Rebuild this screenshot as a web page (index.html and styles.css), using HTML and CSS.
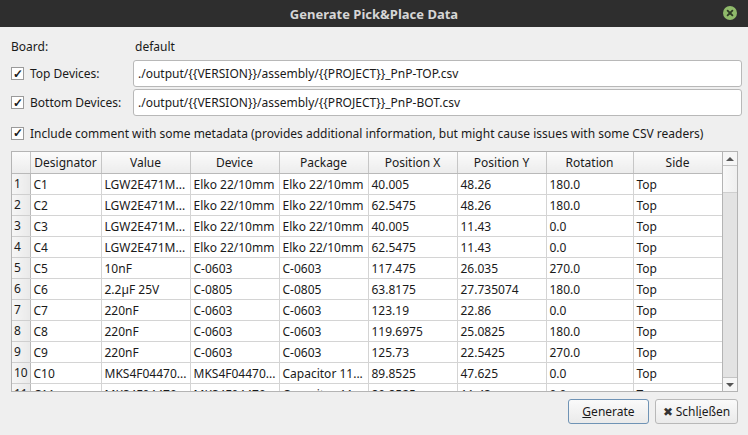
FILE: index.html
```html
<!DOCTYPE html>
<html>
<head>
<meta charset="utf-8">
<link rel="stylesheet" href="styles.css">
</head>
<body>
<div class="window">
  <div class="titlebar">
    <span class="title">Generate Pick&amp;Place Data</span>
    <span class="close"><svg width="14" height="14" viewBox="0 0 14 14"><circle cx="7" cy="7" r="7" fill="#8fba6a"/><path d="M4.6 4.6 L9.4 9.4 M9.4 4.6 L4.6 9.4" stroke="#2d3a25" stroke-width="1.8" stroke-linecap="round"/></svg></span>
  </div>
  <div class="content">
    <div class="row board"><span class="lbl">Board:</span><span>default</span></div>
    <div class="row field">
      <label class="chk"><span class="box">✓</span>Top Devices:</label>
      <div class="input">./output/{{VERSION}}/assembly/{{PROJECT}}_PnP-TOP.csv</div>
    </div>
    <div class="row field">
      <label class="chk"><span class="box">✓</span>Bottom Devices:</label>
      <div class="input">./output/{{VERSION}}/assembly/{{PROJECT}}_PnP-BOT.csv</div>
    </div>
    <div class="row meta"><label class="chk"><span class="box">✓</span>Include comment with some metadata (provides additional information, but might cause issues with some CSV readers)</label></div>
    <div class="tablewrap">
      <div class="tablearea">
        <table>
          <colgroup><col class="c0"><col class="c1"><col class="c2"><col class="c2"><col class="c2"><col class="c2"><col class="c2"><col class="c7"><col class="c2"></colgroup>
          <thead><tr><th class="corner"></th><th>Designator</th><th>Value</th><th>Device</th><th>Package</th><th>Position X</th><th>Position Y</th><th>Rotation</th><th>Side</th></tr></thead>
          <tbody>
            <tr><th>1</th><td>C1</td><td>LGW2E471M...</td><td>Elko 22/10mm</td><td>Elko 22/10mm</td><td>40.005</td><td>48.26</td><td>180.0</td><td>Top</td></tr>
            <tr><th>2</th><td>C2</td><td>LGW2E471M...</td><td>Elko 22/10mm</td><td>Elko 22/10mm</td><td>62.5475</td><td>48.26</td><td>180.0</td><td>Top</td></tr>
            <tr><th>3</th><td>C3</td><td>LGW2E471M...</td><td>Elko 22/10mm</td><td>Elko 22/10mm</td><td>40.005</td><td>11.43</td><td>0.0</td><td>Top</td></tr>
            <tr><th>4</th><td>C4</td><td>LGW2E471M...</td><td>Elko 22/10mm</td><td>Elko 22/10mm</td><td>62.5475</td><td>11.43</td><td>0.0</td><td>Top</td></tr>
            <tr><th>5</th><td>C5</td><td>10nF</td><td>C-0603</td><td>C-0603</td><td>117.475</td><td>26.035</td><td>270.0</td><td>Top</td></tr>
            <tr><th>6</th><td>C6</td><td>2.2µF 25V</td><td>C-0805</td><td>C-0805</td><td>63.8175</td><td>27.735074</td><td>180.0</td><td>Top</td></tr>
            <tr><th>7</th><td>C7</td><td>220nF</td><td>C-0603</td><td>C-0603</td><td>123.19</td><td>22.86</td><td>0.0</td><td>Top</td></tr>
            <tr><th>8</th><td>C8</td><td>220nF</td><td>C-0603</td><td>C-0603</td><td>119.6975</td><td>25.0825</td><td>180.0</td><td>Top</td></tr>
            <tr><th>9</th><td>C9</td><td>220nF</td><td>C-0603</td><td>C-0603</td><td>125.73</td><td>22.5425</td><td>270.0</td><td>Top</td></tr>
            <tr><th>10</th><td>C10</td><td>MKS4F04470...</td><td>MKS4F04470...</td><td>Capacitor 11...</td><td>89.8525</td><td>47.625</td><td>0.0</td><td>Top</td></tr>
            <tr><th>11</th><td>C11</td><td>MKS4F04470...</td><td>MKS4F04470...</td><td>Capacitor 11...</td><td>89.8525</td><td>11.43</td><td>0.0</td><td>Top</td></tr>
          </tbody>
        </table>
      </div>
      <div class="scrollbar">
        <div class="sbtn"><span class="arrow up"></span></div>
        <div class="thumb"></div>
        <div class="track"></div>
        <div class="sbtn down"><span class="arrow dn"></span></div>
      </div>
    </div>
    <div class="buttons">
      <button class="btn default"><u>G</u>enerate</button>
      <button class="btn"><span class="x">✖</span>Schl<u>i</u>eßen</button>
    </div>
  </div>
</div>
</body>
</html>
```
FILE: styles.css
```css
* { box-sizing: border-box; }
html, body { margin: 0; padding: 0; }
body {
  width: 748px; height: 435px; overflow: hidden;
  background: #efefef;
  font-family: "Noto Sans", "Open Sans", sans-serif;
  font-size: 12px;
  color: #1a1a1a;
}
.window { display: flex; flex-direction: column; height: 435px; }
.titlebar {
  height: 27px; background: #2e2e2e;
  display: flex; align-items: center; justify-content: center;
  position: relative;
}
.title { color: #d6d6d6; font-weight: bold; font-size: 13px; }
.close { position: absolute; right: 11px; top: 6px; width: 14px; height: 14px; display: flex; }
.content { padding: 10px 10px 0 11px; display: flex; flex-direction: column; }
.row { display: flex; align-items: center; }
.board { height: 19px; }
.board .lbl { width: 124px; }
.field { height: 27px; margin-top: 2px; }
.field + .field { margin-top: 2px; }
.board + .field { margin-top: 4px; }
.chk { display: flex; align-items: center; width: 122px; white-space: nowrap; }
.meta { margin-top: 7px; height: 20px; }
.meta .chk { width: auto; }
.box {
  width: 13px; height: 13px; border: 1px solid #9a9a9a; background: #fff;
  margin-right: 6px; display: inline-flex; align-items: center; justify-content: center;
  font-size: 12px; font-weight: bold; line-height: 1; color: #1a1a1a;
}
.input {
  flex: 1; height: 27px; margin-right: -4px;
  background: #fff; border: 1px solid #b8b8b8; border-radius: 3px;
  display: flex; align-items: center; padding-left: 4px;
}
.tablewrap {
  margin-top: 8px; height: 241px; width: 727px;
  border: 1px solid #b4b4b4; display: flex; overflow: hidden; background: #fff;
}
.tablearea { width: 710px; overflow: hidden; }
table { border-collapse: collapse; table-layout: fixed; width: 710px; }
col.c0 { width: 18px; } col.c1 { width: 71px; } col.c2 { width: 89px; } col.c7 { width: 87px; }
thead th {
  height: 21px; font-weight: normal; text-align: center;
  background: linear-gradient(#fbfbfb, #ececec);
  border-right: 1px solid #c6c6c6; border-bottom: 1px solid #b9b9b9;
  padding: 0; white-space: nowrap;
}
tbody th {
  font-weight: normal; text-align: left; padding-left: 2px;
  background: linear-gradient(90deg, #f6f6f6, #e9e9e9);
  border-right: 1px solid #b9b9b9; border-bottom: 1px solid #cfcfcf;
}
td {
  height: 21px; padding: 1px 0 0 3px; white-space: nowrap; overflow: hidden;
  border-right: 1px solid #d4d4d4; border-bottom: 1px solid #d4d4d4;
}
.scrollbar {
  width: 15px; border-left: 1px solid #b4b4b4; display: flex; flex-direction: column;
  background: #e3e3e3;
}
.sbtn {
  height: 14px; background: #f6f6f6; border-bottom: 1px solid #c4c4c4;
  display: flex; align-items: center; justify-content: center;
}
.sbtn.down { border-bottom: none; border-top: 1px solid #c4c4c4; }
.thumb { height: 27px; background: linear-gradient(90deg, #f8f8f8, #efefef); border-bottom: 1px solid #cfcfcf; }
.track { flex: 1; }
.arrow { width: 0; height: 0; border-left: 4px solid transparent; border-right: 4px solid transparent; }
.arrow.up { border-bottom: 4px solid #555; }
.arrow.dn { border-top: 4px solid #555; }
.buttons { display: flex; justify-content: flex-end; gap: 6px; margin-top: 7px; padding-right: 0; }
.btn {
  height: 25px; font-family: inherit; font-size: 12px; color: #1a1a1a;
  background: linear-gradient(#fafafa, #eaeaea); border: 1px solid #b8b8b8; border-radius: 3px;
  padding: 0; display: flex; align-items: center; justify-content: center;
}
.btn.default { width: 81px; border-color: #6f93b5; }
.btn:last-child { width: 83px; }
.x { font-size: 12px; margin-right: 3px; color: #333; }
```
